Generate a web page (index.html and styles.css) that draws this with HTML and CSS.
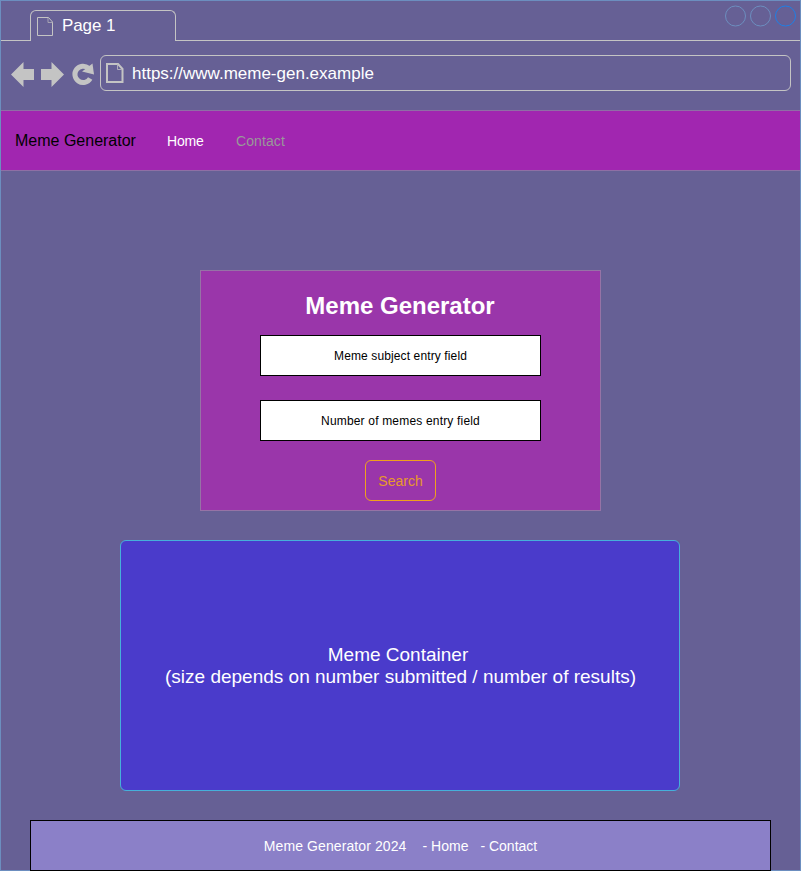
FILE: index.html
```html
<!DOCTYPE html>
<html lang="en">
<head>
<meta charset="utf-8">
<title>Meme Generator</title>
<link rel="stylesheet" href="styles.css">
</head>
<body>
<div class="window">
  <div class="tabs">
    <div class="tab">
      <svg class="tab-icon" width="18" height="21" viewBox="0 0 18 21"><path d="M1.500 1.500h11l4 4.500v13.500h-15z" fill="none" stroke="#c4c4c4"/><path d="M12 2v4.500h4.500" fill="none" stroke="#a5a2b2"/></svg>
      <span>Page 1</span>
    </div>
    <div class="tab-rest">
      <svg width="72" height="22" viewBox="0 0 72 22" fill="none" stroke="#6c8ebf"><circle cx="10.500" cy="11" r="10"/><circle cx="35.500" cy="11" r="10"/><circle cx="60.500" cy="11" r="10" stroke="#1e7fe6"/></svg>
    </div>
  </div>
  <div class="toolbar">
    <svg class="controls" width="86" height="28" viewBox="0 0 86 28" fill="#c4c4c4">
      <path d="M1 14.500L13.500 2v7H24v11H13.500v7z"/>
      <path d="M54 14.500L41.500 2v7H31v11h10.500v7z"/>
      <path d="M80.200 18.500A8.200 8.200 0 1 1 78.500 8.200" fill="none" stroke="#c4c4c4" stroke-width="5"/>
      <path d="M82.500 3.500L84 14.500L72 11.500z"/>
    </svg>
    <div class="address">
      <svg width="20" height="22" viewBox="0 0 20 22"><path d="M2 2h11l4.500 5v13H2z" fill="none" stroke="#c4c4c4" stroke-width="2"/><path d="M12.500 2.500v5H17" fill="none" stroke="#b0adba"/></svg>
      <span>https://www.meme-gen.example</span>
    </div>
  </div>
  <nav class="nav">
    <span class="brand">Meme Generator</span>
    <span class="link active">Home</span>
    <span class="link">Contact</span>
  </nav>
  <main class="main">
    <section class="form">
      <h1>Meme Generator</h1>
      <div class="field subject">Meme subject entry field</div>
      <div class="field count">Number of memes entry field</div>
      <div class="search">Search</div>
    </section>
    <section class="memes">
      <p class="memes-title">Meme Container</p>
      <p>(size depends on number submitted / number of results)</p>
    </section>
  </main>
  <footer class="footer"><span class="copyright">Meme Generator 2024</span><span>- Home</span><span>- Contact</span></footer>
</div>
</body>
</html>
```

FILE: styles.css
```css
* { box-sizing: border-box; }
body { margin: 0; font-family: "Liberation Sans", Arial, sans-serif; color: #fff; }
h1, p { margin: 0; }
svg { display: block; flex: none; }
.window {
  width: 801px; height: 871px;
  display: flex; flex-direction: column;
  background: #666095;
  border: 1px solid #6c8ebf;
}
.tabs { display: flex; height: 40px; padding-top: 9px; }
.tabs::before { content: ""; width: 29px; border-bottom: 1px solid #c4c4c4; }
.tab {
  display: flex; width: 146px; padding: 5px 0 0 5px; gap: 8px;
  border: 1px solid #c4c4c4; border-bottom: 0; border-radius: 6px 6px 0 0;
  font-size: 17px; line-height: 20px; letter-spacing: -0.1px;
}
.tab-rest { flex: 1; display: flex; justify-content: flex-end; border-bottom: 1px solid #c4c4c4; }
.tab-rest svg { margin: -5.5px 3px 0 0; }
.toolbar { display: flex; height: 69px; padding: 14px 9px 0; }
.controls { margin: 5px 4px 0 0; }
.address {
  flex: 1; height: 36px; display: flex; align-items: center; gap: 7px; padding-left: 4px;
  border: 1px solid #c4c4c4; border-radius: 6px; font-size: 17px;
}
.address span { padding-top: 1px; }
.nav {
  display: flex; align-items: center; height: 61px; padding-left: 14px;
  background: #a126b0; border: solid #8f6fa5; border-width: 1px 0;
}
.brand { width: 152px; font-size: 16px; color: #000; }
.link { width: 69px; font-size: 14px; color: #999; letter-spacing: 0.1px; }
.active { color: #fff; letter-spacing: -0.2px; }
.main { display: flex; flex-direction: column; align-items: center; padding-top: 99px; }
.form {
  width: 401px; height: 241px; padding-top: 20px;
  display: flex; flex-direction: column; align-items: center;
  background: #9a36aa; border: 1px solid #9673a6;
}
h1 { font-size: 24px; line-height: 30px; margin: 0 1px 14px 0; }
.field {
  width: 281px; height: 41px; margin-bottom: 24px;
  display: flex; align-items: center; justify-content: center;
  background: #fff; border: 1px solid #000; color: #000; font-size: 12px;
}
.subject { letter-spacing: 0.12px; }
.count { letter-spacing: 0.18px; }
.search {
  width: 71px; height: 41px; margin-top: -5px;
  display: flex; align-items: center; justify-content: center;
  border: 1px solid #f0a11c; border-radius: 6px; color: #e89a2c; font-size: 14px;
}
.memes {
  width: 560px; height: 251px; margin: 29px 1px 0 0;
  display: flex; flex-direction: column; justify-content: center;
  background: #4a3bcb; border: 1px solid #46b0da; border-radius: 6px;
  font-size: 19px; line-height: 22px; text-align: center;
}
.memes p { padding-left: 1px; }
.memes .memes-title { padding: 0 4px 0 0; }
.footer {
  width: 741px; height: 51px; margin: 29px 0 -1px 29px;
  display: flex; align-items: center; justify-content: center; flex: none;
  background: #8b80c8; border: 1px solid #000; font-size: 14px; white-space: pre;
}
.footer span + span { margin-left: 16px; }
.footer span:last-child { margin-left: 12px; }
.copyright { letter-spacing: 0.1px; }
```
